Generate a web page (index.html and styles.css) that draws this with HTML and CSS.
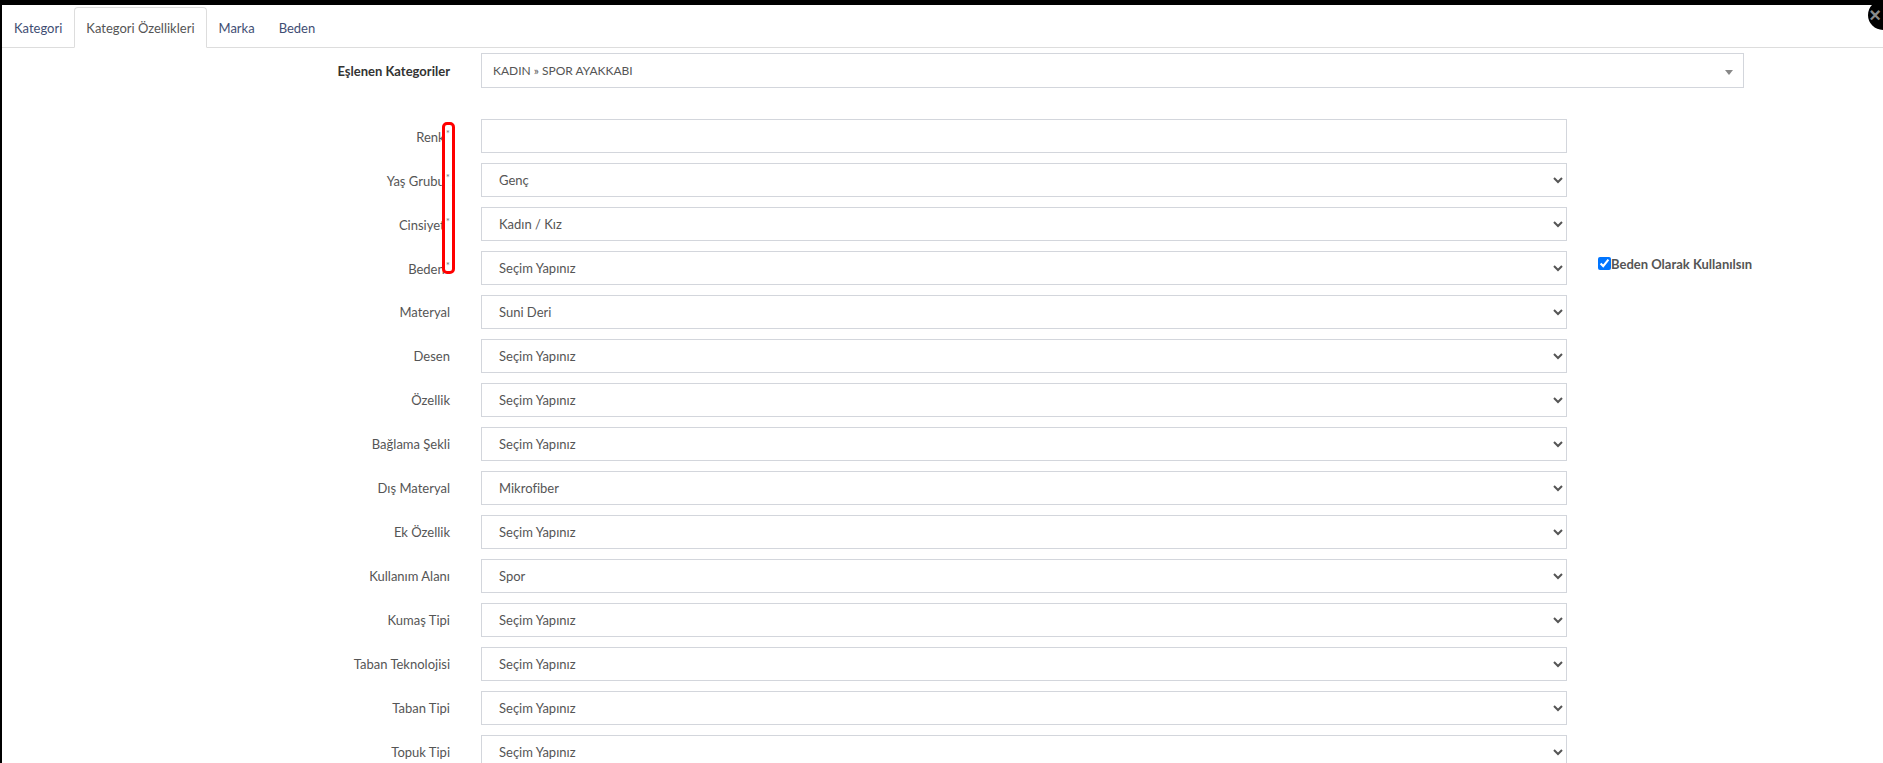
FILE: index.html
```html
<!DOCTYPE html>
<html lang="tr">
  <head>
    <meta charset="UTF-8" />
    <title>Kategori Özellikleri</title>
    <link rel="stylesheet" href="styles.css">
  </head>
  <body>
    <div class="modal">
      <button class="modal-close" type="button">&times;</button>
      <ul class="nav-tabs">
        <li><a href="#">Kategori</a></li>
        <li class="active"><a href="#">Kategori Özellikleri</a></li>
        <li><a href="#">Marka</a></li>
        <li><a href="#">Beden</a></li>
      </ul>

      <div class="tab-body">
        <div class="form-row main-row">
          <label class="bold">Eşlenen Kategoriler</label>
          <div class="select2">
            <span>KADIN » SPOR AYAKKABI</span>
            <b class="select2-arrow"></b>
          </div>
        </div>

        <div class="attr-list">
          <div class="marker"></div>

          <div class="form-row">
            <label>Renk<sup>*</sup></label>
            <input type="text" class="form-control" />
          </div>
          <div class="form-row">
            <label>Yaş Grubu<sup>*</sup></label>
            <select class="form-control"><option>Genç</option></select>
          </div>
          <div class="form-row">
            <label>Cinsiyet<sup>*</sup></label>
            <select class="form-control"><option>Kadın / Kız</option></select>
          </div>
          <div class="form-row">
            <label>Beden<sup>*</sup></label>
            <select class="form-control"><option>Seçim Yapınız</option></select>
            <label class="check"><input type="checkbox" checked />Beden Olarak Kullanılsın</label>
          </div>
          <div class="form-row">
            <label>Materyal</label>
            <select class="form-control"><option>Suni Deri</option></select>
          </div>
          <div class="form-row">
            <label>Desen</label>
            <select class="form-control"><option>Seçim Yapınız</option></select>
          </div>
          <div class="form-row">
            <label>Özellik</label>
            <select class="form-control"><option>Seçim Yapınız</option></select>
          </div>
          <div class="form-row">
            <label>Bağlama Şekli</label>
            <select class="form-control"><option>Seçim Yapınız</option></select>
          </div>
          <div class="form-row">
            <label>Dış Materyal</label>
            <select class="form-control"><option>Mikrofiber</option></select>
          </div>
          <div class="form-row">
            <label>Ek Özellik</label>
            <select class="form-control"><option>Seçim Yapınız</option></select>
          </div>
          <div class="form-row">
            <label>Kullanım Alanı</label>
            <select class="form-control"><option>Spor</option></select>
          </div>
          <div class="form-row">
            <label>Kumaş Tipi</label>
            <select class="form-control"><option>Seçim Yapınız</option></select>
          </div>
          <div class="form-row">
            <label>Taban Teknolojisi</label>
            <select class="form-control"><option>Seçim Yapınız</option></select>
          </div>
          <div class="form-row">
            <label>Taban Tipi</label>
            <select class="form-control"><option>Seçim Yapınız</option></select>
          </div>
          <div class="form-row">
            <label>Topuk Tipi</label>
            <select class="form-control"><option>Seçim Yapınız</option></select>
          </div>
        </div>
      </div>
    </div>
  </body>
</html>
```

FILE: styles.css
```css
html,
body {
  margin: 0;
  padding: 0;
  height: 100%;
  overflow: hidden;
}

body {
  background-color: #000;
  font-family: Lato, "Noto Sans", sans-serif;
  font-size: 13px;
  color: #555;
}

.modal {
  position: relative;
  margin: 5px 0 0 2px;
  padding-top: 2px;
  background-color: #fff;
  border-top-right-radius: 10px;
  min-height: 800px;
}

.modal-close {
  position: absolute;
  top: -5px;
  right: -15px;
  width: 30px;
  height: 30px;
  border: none;
  border-radius: 50%;
  background-color: #000;
  color: #8a8a8a;
  font-size: 20px;
  line-height: 26px;
  padding: 0 16px 0 0;
  text-align: center;
  font-family: Arial, sans-serif;
  font-weight: bold;
}

.nav-tabs {
  display: flex;
  list-style: none;
  margin: 0;
  padding: 0;
  border-bottom: 1px solid #ddd;
}

.nav-tabs li {
  margin-bottom: -1px;
}

.nav-tabs a {
  display: block;
  height: 39px;
  line-height: 40px;
  padding: 0 11px;
  color: #3f4e73;
  text-decoration: none;
  border: 1px solid transparent;
  border-radius: 4px 4px 0 0;
}

.nav-tabs li.active a {
  color: #555;
  border-color: #ddd #ddd #fff;
  background-color: #fff;
}

.tab-body {
  padding-top: 5px;
}

.form-row {
  display: grid;
  grid-template-columns: 448px 1086px auto;
  column-gap: 31px;
  align-items: center;
  margin-bottom: 10px;
}

.form-row > label {
  text-align: right;
  color: #555;
  white-space: nowrap;
}

.form-row > label sup {
  font-size: 10px;
  margin-left: 1px;
  color: #777;
}

.form-row > label.bold {
  font-weight: bold;
  color: #333;
}

.main-row {
  margin-bottom: 31px;
}

.select2 {
  grid-column: 2 / 4;
  width: 1263px;
  box-sizing: border-box;
  height: 35px;
  border: 1px solid #d3d6dc;
  display: flex;
  align-items: center;
  justify-content: space-between;
  padding: 0 10px 0 11px;
  font-size: 12px;
}

.select2-arrow {
  width: 0;
  height: 0;
  border-left: 4px solid transparent;
  border-right: 4px solid transparent;
  border-top: 5px solid #888;
  margin-top: 3px;
}

.form-control {
  box-sizing: border-box;
  width: 1086px;
  height: 34px;
  margin: 0;
  padding: 0 12px 0 13px;
  border: 1px solid #d3d6dc;
  border-radius: 0;
  background-color: #fff;
  font-family: inherit;
  font-size: 13px;
  color: #555;
}

.attr-list {
  position: relative;
}

.marker {
  position: absolute;
  left: 440px;
  top: 3px;
  width: 7px;
  height: 146px;
  border: 3px solid #f00;
  border-radius: 5px;
}

.check {
  display: flex;
  align-items: center;
  font-weight: bold;
  color: #333;
  margin-top: -9px;
  text-align: left;
}

.check input {
  width: 13px;
  height: 13px;
  margin: 0;
}
```
